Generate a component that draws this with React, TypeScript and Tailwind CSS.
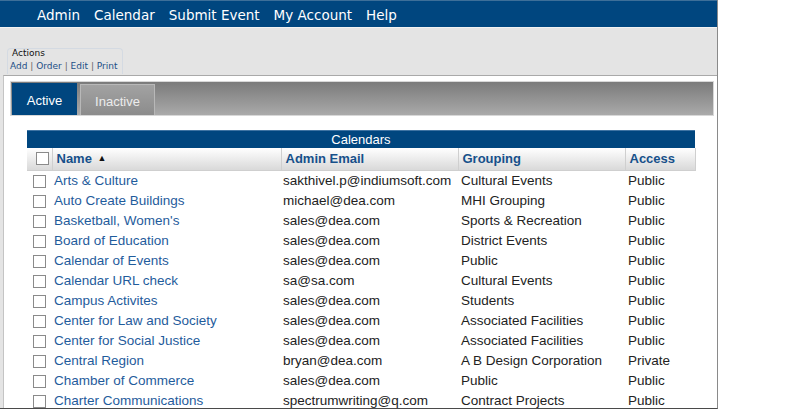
import React from "react";

const rows: [string, string, string, string][] = [
  ["Arts & Culture", "sakthivel.p@indiumsoft.com", "Cultural Events", "Public"],
  ["Auto Create Buildings", "michael@dea.com", "MHI Grouping", "Public"],
  ["Basketball, Women's", "sales@dea.com", "Sports & Recreation", "Public"],
  ["Board of Education", "sales@dea.com", "District Events", "Public"],
  ["Calendar of Events", "sales@dea.com", "Public", "Public"],
  ["Calendar URL check", "sa@sa.com", "Cultural Events", "Public"],
  ["Campus Activites", "sales@dea.com", "Students", "Public"],
  ["Center for Law and Society", "sales@dea.com", "Associated Facilities", "Public"],
  ["Center for Social Justice", "sales@dea.com", "Associated Facilities", "Public"],
  ["Central Region", "bryan@dea.com", "A B Design Corporation", "Private"],
  ["Chamber of Commerce", "sales@dea.com", "Public", "Public"],
  ["Charter Communications", "spectrumwriting@q.com", "Contract Projects", "Public"],
];

const navItems = ["Admin", "Calendar", "Submit Event", "My Account", "Help"];

function Box({ className = "" }: { className?: string }) {
  return <span className={`block h-[13px] w-[13px] border border-[#8a8a8a] bg-white ${className}`} />;
}

export default function App() {
  return (
    <div className="h-[414px] w-[812px] overflow-hidden bg-white">
      <div className="flex h-[409px] w-[718px] flex-col overflow-hidden border-r border-b border-r-[#8a8a8a] border-b-[#4a4a4a] bg-[#e4e4e4]">
        {/* top nav */}
        <nav className="flex h-[27px] shrink-0 items-center gap-[14px] border-t border-[#3d6f99] bg-[#00467f] pl-[37px] pt-[3px] font-['DejaVu_Sans',sans-serif] text-[13.5px] text-white">
          {navItems.map((n) => (
            <span key={n}>{n}</span>
          ))}
        </nav>
        <div className="h-px shrink-0 bg-[#f2f2f2]" />

        {/* actions */}
        <div className="h-[47px] shrink-0 pl-[7px] pt-[20px]">
          <div className="h-[26px] w-[116px] rounded-t-[4px] border border-b-0 border-[#d4dae2] pl-[4px] font-['DejaVu_Sans',sans-serif] text-[9px] leading-[11px]">
            <div className="-mt-px text-[#111]">Actions</div>
            <div className="mt-[2px] -ml-[2px] text-[#1d4f86]">
              Add <span className="text-[#666]">|</span> Order <span className="text-[#666]">|</span> Edit{" "}
              <span className="text-[#666]">|</span> Print
            </div>
          </div>
        </div>

        {/* content */}
        <div className="ml-[3px] flex-1 border-t border-l border-t-[#a9a9a9] border-l-[#c4c4c4] bg-white">
          <div className="mt-[5px] ml-[6px] mr-[3px] flex h-[35px] items-end gap-[3px] border border-[#d8d8d8] bg-gradient-to-b from-[#7b7b7b] to-[#aaaaaa] pl-[1px] font-['Liberation_Sans',Arial,sans-serif] text-[13px]">
            <div className="flex h-[32px] w-[65px] items-center justify-center bg-[#00467f] pt-[3px] text-white">Active</div>
            <div className="flex h-[31px] w-[75px] items-center justify-center border border-b-0 border-[#b8b8b8] bg-gradient-to-b from-[#a2a2a2] to-[#8c8c8c] pt-[3px] text-[#ececec]">
              Inactive
            </div>
          </div>

          <div className="mt-[14px] ml-[23px] w-[668px] font-['Liberation_Sans',Arial,sans-serif]">
            <div className="flex h-[18px] items-center justify-center border-t border-[#3f74a3] bg-[#00467f] text-[13px] text-white">
              Calendars
            </div>
            <table className="w-full table-fixed border-collapse">
              <colgroup>
                <col className="w-[25px]" />
                <col className="w-[229px]" />
                <col className="w-[177px]" />
                <col className="w-[167px]" />
                <col className="w-[70px]" />
              </colgroup>
              <thead>
                <tr className="h-[22px] bg-gradient-to-b from-white to-[#d9d9d9] text-left text-[13px] font-bold text-[#16508a]">
                  <th className="border-r border-b border-[#cfcfcf] pl-[9px]">
                    <Box />
                  </th>
                  <th className="border-r border-b border-[#cfcfcf] pl-[4px]">
                    Name <span className="relative -top-[2px] ml-[2px] text-[9px] text-[#111]">▲</span>
                  </th>
                  <th className="border-r border-b border-[#cfcfcf] pl-[4px]">Admin Email</th>
                  <th className="border-r border-b border-[#cfcfcf] pl-[4px]">Grouping</th>
                  <th className="border-r border-b border-[#cfcfcf] pl-[4px]">Access</th>
                </tr>
              </thead>
              <tbody className="text-[13.5px] leading-[16px] text-[#222]">
                {rows.map(([name, email, group, access]) => (
                  <tr key={name} className="h-[20px]">
                    <td className="pl-[6px] pt-px">
                      <Box className="mt-[2px]" />
                    </td>
                    <td className="pl-[2px] pt-px text-[#1f5c9c]">{name}</td>
                    <td className="pl-[2px] pt-px">{email}</td>
                    <td className="pl-[3px] pt-px">{group}</td>
                    <td className="pl-[3px] pt-px">{access}</td>
                  </tr>
                ))}
              </tbody>
            </table>
          </div>
        </div>
      </div>
    </div>
  );
}
